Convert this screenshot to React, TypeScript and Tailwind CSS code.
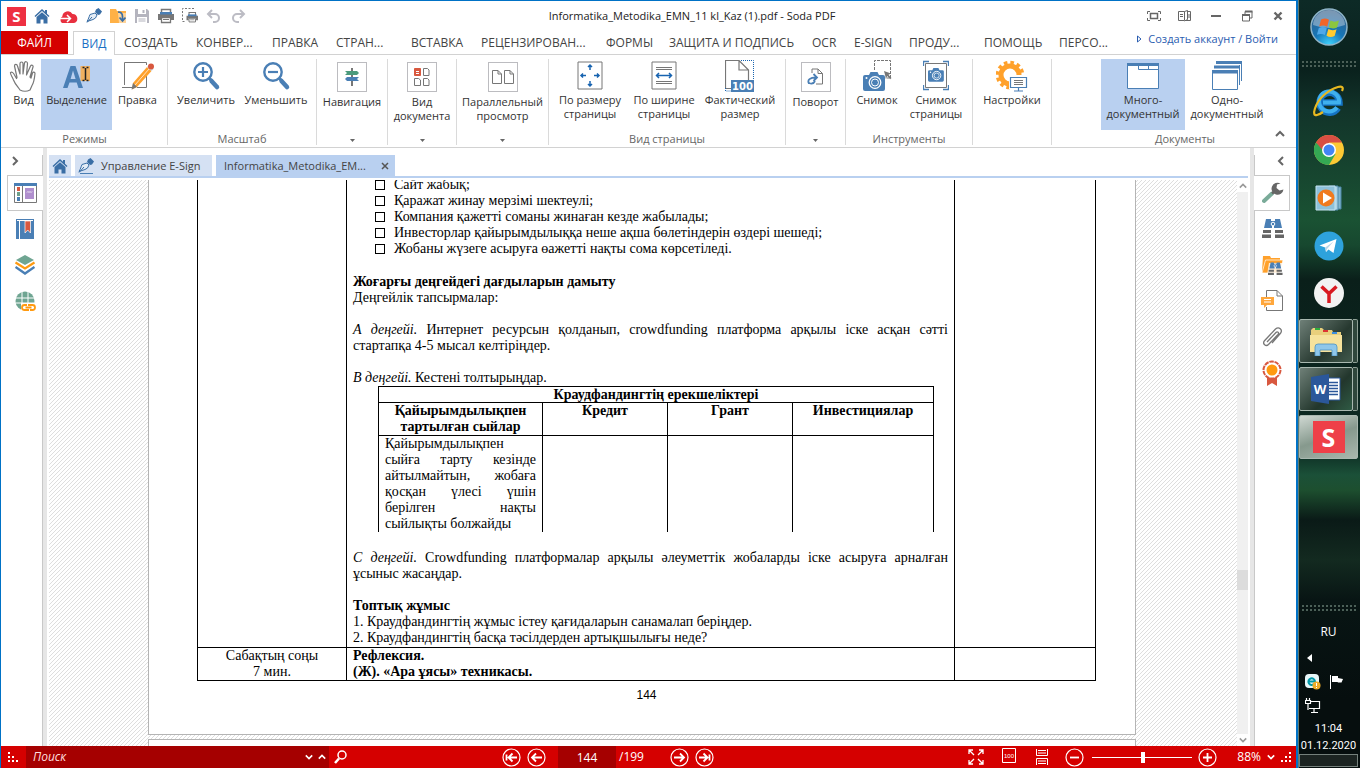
import React from "react";

type IconProps = { className?: string };

const BLUE = "#4a7fb5";
const GRAY = "#777777";
const ORANGE = "#ffa12b";

const HomeIcon = ({ className = "w-4 h-4" }: IconProps) => (
	<svg viewBox="0 0 16 16" className={className} fill="#3a6ea5" aria-hidden="true">
		<path d="M8 1 .5 8l1 1L8 3l6.500 6 1-1L13 5.700V2h-2v1.800z" />
		<path d="M2.500 9 8 4.200 13.500 9v6.500H9.500v-4h-3v4h-4z" />
	</svg>
);

const PenIcon = ({ className = "w-4 h-4", line = false }: IconProps & { line?: boolean }) => (
	<svg viewBox="0 0 16 16" className={className} fill="none" aria-hidden="true">
		<path d="M10 1.500 12.500 0 16 3.500 14 6.500 12 7 9 4z" fill="#3a6ea5" />
		<path d="M9 5 4 6.500C3 9 2.500 11 1 13.500l6-2 2.500-1.500L11 7z" fill="#e3ecf6" stroke="#3a6ea5" />
		<path d="M1 14.500 6 9" stroke="#3a6ea5" />
		{line && <path d="M2 15.500h13" stroke={BLUE} />}
	</svg>
);

const CloudIcon = () => (
	<svg viewBox="0 0 20 16" className="w-5 h-4 shrink-0" aria-hidden="true">
		<path d="M4 15a4 4 0 0 1 .3-6.500A5.500 5.500 0 0 1 14.500 6 4.600 4.600 0 0 1 16 15z" fill="#e8303f" />
		<path d="M0 10.500h12M9 7l3.500 3.500L9 14" stroke="#fff" strokeWidth="1.500" fill="none" />
	</svg>
);

const FolderDownIcon = () => (
	<svg viewBox="0 0 16 16" className="w-4 h-4" aria-hidden="true">
		<path d="M0 15V1h6l1 2h9v12z" fill="#ffb146" />
		<path d="M8 5h8v10H9z" fill="#fff" opacity=".45" />
		<path d="M8 4c3.500 0 4.500 1.500 4.500 4.500V12M9.500 9.500l3 3.500 3-3.500" stroke="#3a6ea5" strokeWidth="1.700" fill="none" />
	</svg>
);

const SaveIcon = () => (
	<svg viewBox="0 0 16 16" className="w-4 h-4" aria-hidden="true">
		<path d="M1 1h12l2 2v12H1z" fill="#b4b4be" />
		<path d="M4 1h8v5H4zM3 9h10v6H3z" fill="#fff" />
		<path d="M8.500 2h2v3h-2zM4.500 10.500h7v1h-7zM4.500 12.500h7v1h-7z" fill="#b4b4be" />
	</svg>
);

const PrintIcon = ({ dashed = false }: { dashed?: boolean }) => (
	<svg viewBox="0 0 16 16" className="w-4 h-4" fill="none" aria-hidden="true">
		{dashed && <path d="M12 .5H.5v13H4" stroke={GRAY} strokeDasharray="2 1.500" />}
		<g transform={dashed ? "translate(4.500 3.500) scale(.72)" : undefined}>
			<path d="M3.500 6V1.500h9V6" stroke={GRAY} strokeWidth="1.500" />
			<path d="M0 6h16v6h-3V9H3v3H0z" fill={GRAY} />
			<path d="M2 4h12v2.500H2z" fill={BLUE} />
			<path d="M3.500 9.500h9v5h-9z" fill="#fff" stroke={GRAY} strokeWidth="1.300" />
			<path d="M5 11.500h6" stroke={GRAY} />
		</g>
	</svg>
);

const UndoIcon = ({ className = "w-4 h-4" }: IconProps) => (
	<svg viewBox="0 0 16 16" className={className} fill="none" aria-hidden="true">
		<path d="M6 2 2 6l4 4M2 6h7a4 4 0 0 1 0 8H7" stroke="#bcbcc4" strokeWidth="2" />
	</svg>
);

const HandIcon = () => (
	<svg viewBox="0 0 30 32" className="w-[30px] h-8" aria-hidden="true">
		<path
			d="M11 30c-2-3-5-6-6.500-10C3.500 17 1 14 1.500 12.500c1.500-1 3 .5 4 2.500l2 3.500.5-1L5.500 6c0-2 2.500-2.200 3 0L11 14V3.500c0-2 3-2 3 0V14l1.500-11c.5-2 3-1.500 3 .5L17.500 15l4-9c1-1.700 3-.7 2.500 1l-3 10 1 1 1.500-5c.7-1.500 2.500-1 2.500.5-.5 5-1 9-3 12L21 30c-3 1.500-7 1.500-10 0z"
			fill="#fff"
			stroke="#777"
			strokeWidth="1.200"
			strokeLinejoin="round"
		/>
	</svg>
);

const SelectTextIcon = () => (
	<svg viewBox="0 0 30 32" className="w-[30px] h-8" aria-hidden="true">
		<path d="M18.500 6h9.500v15h-9.500z" fill="#f0b060" />
		<path d="M8.500 6h5l7.500 22h-4.500l-1.800-5.500H7.500L5.500 28H1zm2.500 4.500L8.600 19h5z" fill={BLUE} />
		<path d="M20.500 7.500h2M24.500 7.500h2M20.500 20.500h2M24.500 20.500h2M23.500 8v12" stroke="#222" strokeWidth="1.500" />
	</svg>
);

const EditIcon = () => (
	<svg viewBox="0 0 32 32" className="w-8 h-8" fill="none" aria-hidden="true">
		<path d="M24.500 14v13.500H15M10 27.500H0M2.500 25V2.500h22V5" stroke={GRAY} />
		<path d="m25 7 4.500 4L15 27l-5 2.500 1-6.500z" fill={ORANGE} />
		<path d="m11 23 4 4-5.500 2.500z" fill="#777" />
		<path d="m25 7 2-2 4.500 4-2 2z" fill="#cdd3dc" />
		<circle cx="29" cy="6.500" r="3" fill="#d8583f" />
		<path d="m27 9-14 16" stroke="#fff" strokeWidth=".7" />
	</svg>
);

const ZoomIcon = ({ plus = false }: { plus?: boolean }) => (
	<svg viewBox="0 0 30 32" className="w-[30px] h-8" fill="none" stroke={BLUE} aria-hidden="true">
		<circle cx="12" cy="12" r="8.700" strokeWidth="2.400" />
		<path d="m18 18 3 3" strokeWidth="3" />
		<path d="m20.500 21 5.500 6" strokeWidth="4.500" strokeLinecap="round" />
		<path d={plus ? "M7 12h10M12 7v10" : "M7 12h10"} strokeWidth="2.200" />
	</svg>
);

const NavIcon = () => (
	<svg viewBox="0 0 16 18" className="w-4 h-[18px]" aria-hidden="true">
		<path d="M7 0h2v18H7z" fill={GRAY} />
		<path d="M1 3h12l2 2-2 2H1l2-2z" fill="#4b9a7c" />
		<path d="M15 9H3l-2 2 2 2h12l-2-2z" fill={BLUE} />
	</svg>
);

const DocViewIcon = () => (
	<svg viewBox="0 0 16 18" className="w-4 h-[18px]" fill="none" stroke={GRAY} aria-hidden="true">
		<path d="M.5.500h6v7h-6z" fill="#d8583f" stroke="#d8583f" />
		<path d="M2 3.500h3M2 5.500h3" stroke="#fff" />
		<path d="M9.500.5h4l1.500 1.500v5.500H9.500zM.5 10.500h4L6.500 12v5.500h-6zM9.500 10.500h4L15 12v5.500H9.500z" />
	</svg>
);

const TwoPagesIcon = () => (
	<svg viewBox="0 0 22 14" className="w-[22px] h-3.5" fill="none" stroke={GRAY} aria-hidden="true">
		<path d="M.5.500H6L9.500 4v9.500h-9zM6 .5V4h3.500M12.500.5H18L21.500 4v9.500h-9zM18 .5V4h3.500" />
	</svg>
);

const FitPageIcon = () => (
	<svg viewBox="0 0 26 30" className="w-[26px] h-[30px]" fill="none" aria-hidden="true">
		<path d="M1 1h24v27H1z" fill="#fff" stroke={GRAY} />
		<path d="M13 4v5M13 20v5M4 14.500h5M17 14.500h5M11 6l2-2 2 2M11 23l2 2 2-2M6 12.500l-2 2 2 2M20 12.500l2 2-2 2" stroke="#1763b0" strokeWidth="1.500" />
	</svg>
);

const FitWidthIcon = () => (
	<svg viewBox="0 0 26 30" className="w-[26px] h-[30px]" fill="none" aria-hidden="true">
		<path d="M1 1h24v27H1z" fill="#fff" stroke={GRAY} />
		<path d="M5 6.500h16M5 8.500h16M5 20.500h16M5 22.500h16" stroke={GRAY} />
		<path d="M5 14.500h16M8 12l-2.500 2.500L8 17M18 12l2.500 2.500L18 17" stroke="#1763b0" strokeWidth="1.500" />
	</svg>
);

const ActualSizeIcon = () => (
	<svg viewBox="0 0 30 32" className="w-[30px] h-8" fill="none" aria-hidden="true">
		<path d="M6 28.500H.5V.500H14L23.500 10v10M14 .5V10h9.500" stroke={GRAY} strokeWidth="1.200" />
		<path d="M16 .5h12.500V20M.5 28v3H6" stroke="#1763b0" strokeDasharray="1 1" />
		<path d="M6 20h23v12H6z" fill={BLUE} />
		<text x="17.500" y="30" textAnchor="middle" fill="#fff" fontFamily="DejaVu Sans, sans-serif" fontSize="10" fontWeight="700">
			100
		</text>
	</svg>
);

const RotateIcon = () => (
	<svg viewBox="0 0 18 18" className="w-[18px] h-[18px]" fill="none" aria-hidden="true">
		<path d="M5 5V1h6l4.500 4.500V16H9M11 1v4.500h4.500" stroke={GRAY} />
		<path d="M2 15.500C0 12 3 9.500 9 9.500M6.500 6 10 9.500 6.500 13M2 15c3 1.500 5 0 6-2" stroke={BLUE} strokeWidth="1.800" />
	</svg>
);

const Camera = ({ transform }: { transform?: string }) => (
	<g transform={transform}>
		<path d="M0 5q0-2 2-2h4l1.500-3h7L16 3h4q2 0 2 2v12q0 2-2 2H2q-2 0-2-2z" fill={BLUE} />
		<circle cx="12" cy="10.500" r="5.800" fill="none" stroke="#fff" strokeWidth="1.300" />
		<circle cx="12" cy="10.500" r="3.500" fill="none" stroke="#fff" />
		<circle cx="3.500" cy="6" r="1" fill="#fff" />
	</g>
);

const SnapshotIcon = () => (
	<svg viewBox="0 0 30 32" className="w-[30px] h-8" fill="none" aria-hidden="true">
		<path d="M12.500 10V.500h16V18H23" stroke={GRAY} strokeDasharray="3 1" />
		<Camera transform="translate(1 12)" />
		<path d="m22 11 7 2.500-2.500 1.200 3 3.300-1.300 1.200-3-3.200-1.200 2.500z" fill={GRAY} />
	</svg>
);

const PageSnapshotIcon = () => (
	<svg viewBox="0 0 26 32" className="w-[26px] h-8" fill="none" aria-hidden="true">
		<path d="M.5 6V1.500H6M20 1.500h5.500V6M.5 25v4.500H6M20 29.500h5.500V25" stroke={BLUE} strokeWidth="1.300" />
		<path d="M2.500 3.500h21v24h-21z" fill="#fff" stroke={GRAY} />
		<Camera transform="translate(5 8) scale(.72)" />
	</svg>
);

const SettingsIcon = () => (
	<svg viewBox="0 0 32 32" className="w-8 h-8" fill="none" aria-hidden="true">
		<circle cx="14" cy="15" r="9" stroke={ORANGE} strokeWidth="5" />
		<circle cx="14" cy="15" r="12.300" stroke={ORANGE} strokeWidth="4" strokeDasharray="3.500 2.940" />
		<path d="M14 16h17v12H14z" fill="#fff" stroke="#fff" strokeWidth="2" />
		<path d="M14.500 17.500h16v10h-16zM22.500 28v3M18 31h9" stroke={BLUE} strokeWidth="1.200" />
		<path d="M18 20.500h9M18 22.500h9M18 24.500h9" stroke={GRAY} />
	</svg>
);

const MultiDocIcon = () => (
	<svg viewBox="0 0 32 28" className="w-8 h-7" aria-hidden="true">
		<path d="M.5 1.500h31v25H.5z" fill="#fff" stroke={BLUE} />
		<path d="M0 1h32v3H0z" fill={BLUE} />
		<path d="M11.500 4v3.500H32M21.500 4v3.500" fill="none" stroke={BLUE} />
	</svg>
);

const SingleDocIcon = () => (
	<svg viewBox="0 0 30 30" className="w-[30px] h-[30px]" fill="none" aria-hidden="true">
		<path d="M4 0h26v3H4zM2 4.500h26v3H2zM0 9h26v3H0z" fill={BLUE} />
		<path d="M29.500 0v20M27.500 4v20" stroke={BLUE} />
		<path d="M.5 12h25v16.500H.5z" fill="#fff" stroke={BLUE} />
	</svg>
);

const Chevron = ({ d, className = "w-2.5 h-2.5", stroke = "#666" }: { d: string; className?: string; stroke?: string }) => (
	<svg viewBox="0 0 10 10" className={className} fill="none" stroke={stroke} strokeWidth="2" aria-hidden="true">
		<path d={d} />
	</svg>
);

const UP = "M1 7l4-4 4 4";
const DOWN = "M1 3l4 4 4-4";
const LEFT = "M7 1L3 5l4 4";
const RIGHT = "M3 1l4 4-4 4";

const Caret = () => (
	<svg viewBox="0 0 5 3" className="w-[5px] h-[3px]" fill="#666" aria-hidden="true">
		<path d="M0 0h5L2.500 3z" />
	</svg>
);

/* ---------- ribbon ---------- */

interface RibbonButtonProps {
	icon: React.ReactNode;
	lines: string[];
	className: string;
	active?: boolean;
}

const RibbonButton = ({ icon, lines, className, active }: RibbonButtonProps) => (
	<button
		className={`h-[71px] shrink-0 flex flex-col items-center whitespace-nowrap text-[11px] leading-[14px] ${
			active ? "bg-[#b9d0f0]" : ""
		} ${className}`}
	>
		<span className="h-[34px] flex items-center">{icon}</span>
		{lines.map((l) => (
			<span key={l}>{l}</span>
		))}
	</button>
);

const RibbonMenu = ({ icon, lines, className }: RibbonButtonProps) => (
	<button
		className={`h-[86px] shrink-0 flex flex-col items-center border-r border-[#dadada] whitespace-nowrap text-[11px] leading-[14px] pt-[3px] ${className}`}
	>
		<span className="w-[30px] h-[30px] mb-[3px] border border-[#bcbcc0] flex items-center justify-center">{icon}</span>
		{lines.map((l) => (
			<span key={l}>{l}</span>
		))}
		<span className="mt-auto pb-[3px]">
			<Caret />
		</span>
	</button>
);

interface GroupProps {
	title?: string;
	className: string;
	children: React.ReactNode;
}

const RibbonGroup = ({ title, className, children }: GroupProps) => (
	<div className={`h-[86px] shrink-0 flex flex-col border-r border-[#dadada] ${className}`}>
		<div className="flex">{children}</div>
		{title && <div className="text-center text-[11px] leading-[18px] text-[#666]">{title}</div>}
	</div>
);

const Ribbon = () => (
	<div className="h-[93px] shrink-0 border-b border-[#d2d2d2] pt-1 flex text-[#333]">
		<RibbonGroup title="Режимы" className="w-[167px] pl-[5px] pr-1">
			<RibbonButton icon={<HandIcon />} lines={["Вид"]} className="w-[35px]" />
			<RibbonButton icon={<SelectTextIcon />} lines={["Выделение"]} className="w-[71px]" active />
			<RibbonButton icon={<EditIcon />} lines={["Правка"]} className="w-[51px]" />
		</RibbonGroup>
		<RibbonGroup title="Масштаб" className="w-[149px] px-[3px]">
			<RibbonButton icon={<ZoomIcon plus />} lines={["Увеличить"]} className="w-[70px]" />
			<RibbonButton icon={<ZoomIcon />} lines={["Уменьшить"]} className="w-[70px]" />
		</RibbonGroup>
		<RibbonMenu icon={<NavIcon />} lines={["Навигация"]} className="w-[71px]" />
		<RibbonMenu icon={<DocViewIcon />} lines={["Вид", "документа"]} className="w-[69px]" />
		<RibbonMenu icon={<TwoPagesIcon />} lines={["Параллельный", "просмотр"]} className="w-[92px]" />
		<RibbonGroup title="Вид страницы" className="w-[237px] px-[3px]">
			<RibbonButton icon={<FitPageIcon />} lines={["По размеру", "страницы"]} className="w-[76px]" />
			<RibbonButton icon={<FitWidthIcon />} lines={["По ширине", "страницы"]} className="w-[72px]" />
			<RibbonButton icon={<ActualSizeIcon />} lines={["Фактический", "размер"]} className="w-[80px]" />
		</RibbonGroup>
		<RibbonMenu icon={<RotateIcon />} lines={["Поворот"]} className="w-[60px]" />
		<RibbonGroup title="Инструменты" className="w-[127px] px-[3px]">
			<RibbonButton icon={<SnapshotIcon />} lines={["Снимок"]} className="w-[56px]" />
			<RibbonButton icon={<PageSnapshotIcon />} lines={["Снимок", "страницы"]} className="w-[62px]" />
		</RibbonGroup>
		<RibbonGroup className="w-[79px] px-[3px]">
			<RibbonButton icon={<SettingsIcon />} lines={["Настройки"]} className="w-[72px]" />
		</RibbonGroup>
		<div className="ml-auto flex">
			<div className="w-[168px]">
				<div className="flex">
					<RibbonButton icon={<MultiDocIcon />} lines={["Много-", "документный"]} className="w-[84px]" active />
					<RibbonButton icon={<SingleDocIcon />} lines={["Одно-", "документный"]} className="w-[84px]" />
				</div>
				<div className="text-center text-[11px] leading-[18px] text-[#666]">Документы</div>
			</div>
			<button aria-label="Свернуть ленту" className="w-[27px] self-end pb-2 pl-1.5">
				<Chevron d={UP} />
			</button>
		</div>
	</div>
);

const MENU = [
	{ label: "СОЗДАТЬ", w: "w-[72px]" },
	{ label: "КОНВЕР...", w: "w-[76px]" },
	{ label: "ПРАВКА", w: "w-[64px]" },
	{ label: "СТРАН...", w: "w-[75px]" },
	{ label: "ВСТАВКА", w: "w-[70px]" },
	{ label: "РЕЦЕНЗИРОВАН...", w: "w-[125px]" },
	{ label: "ФОРМЫ", w: "w-[63px]" },
	{ label: "ЗАЩИТА И ПОДПИСЬ", w: "w-[143px]" },
	{ label: "OCR", w: "w-[42px]" },
	{ label: "E-SIGN", w: "w-[55px]" },
	{ label: "ПРОДУ...", w: "w-[75px]" },
	{ label: "ПОМОЩЬ", w: "w-[75px]" },
	{ label: "ПЕРСО...", w: "w-[75px]" },
];

const TitleBar = () => (
	<header className="h-[30px] shrink-0 flex items-center pl-1.5 pr-2.5">
		<span className="w-[19px] h-[19px] mr-1 bg-[#ee3042] text-white font-bold text-[15px] leading-[19px] text-center">S</span>
		<div className="flex items-center">
			{[
				{ label: "Домой", icon: <HomeIcon />, w: "w-6" },
				{ label: "Облако", icon: <CloudIcon />, w: "w-7" },
				{ label: "Подпись", icon: <PenIcon />, w: "w-6" },
				{ label: "Открыть", icon: <FolderDownIcon />, w: "w-6" },
				{ label: "Сохранить", icon: <SaveIcon />, w: "w-6" },
				{ label: "Печать", icon: <PrintIcon />, w: "w-6" },
				{ label: "Печать области", icon: <PrintIcon dashed />, w: "w-6" },
				{ label: "Отменить", icon: <UndoIcon className="w-4 h-4" />, w: "w-6" },
				{ label: "Вернуть", icon: <UndoIcon className="w-4 h-4 -scale-x-100" />, w: "w-6" },
			].map((b) => (
				<button key={b.label} aria-label={b.label} className={`${b.w} h-6 flex items-center justify-center`}>
					{b.icon}
				</button>
			))}
		</div>
		<h1 className="flex-1 pr-3 text-center text-[11px] text-[#222] whitespace-nowrap">
			Informatika_Metodika_EMN_11 kl_Kaz (1).pdf - Soda PDF
		</h1>
		<div className="flex items-center gap-[15px]">
			<button aria-label="Во весь экран">
				<svg viewBox="0 0 16 12" className="w-4 h-3" fill="none" stroke="#666">
					<path d="M1.500 4V1.500H4M12 1.500h2.500V4M1.500 8v2.500H4M12 10.500h2.500V8" />
					<path d="M4.500 3.500h7v5h-7z" strokeWidth="1.500" />
				</svg>
			</button>
			<button aria-label="Режим чтения">
				<svg viewBox="0 0 16 12" className="w-4 h-3" fill="none" stroke="#666">
					<path d="M7.500 1.500h-6v9h6zM7.500 1.500l3-1v9l-3 1.500M10.500 1.500h3v9h-5M3 4.500h3M3 6.500h3M12 4v4" />
				</svg>
			</button>
			<button aria-label="Свернуть">
				<svg viewBox="0 0 16 12" className="w-4 h-3" fill="none" stroke="#666">
					<path d="M3 6h10" strokeWidth="2" />
				</svg>
			</button>
			<button aria-label="Восстановить">
				<svg viewBox="0 0 16 12" className="w-4 h-3" fill="none" stroke="#666">
					<path d="M3.500 5h7v6h-7zM6 4.500V1.500h7V8h-2" />
					<path d="M3 5h8M6 1.500h7.500" strokeWidth="2" />
				</svg>
			</button>
			<button aria-label="Закрыть">
				<svg viewBox="0 0 16 12" className="w-4 h-3" fill="none" stroke="#666">
					<path d="m4.500 2.500 7 7M11.500 2.500l-7 7" strokeWidth="2.400" />
				</svg>
			</button>
		</div>
	</header>
);

const MenuBar = () => (
	<nav className="h-6 shrink-0 flex border-b border-[#d2d2d2] text-[12px] leading-6 text-[#444] whitespace-nowrap">
		<button className="w-[67px] bg-[#d50000] text-white text-center">ФАЙЛ</button>
		<button className="ml-[5px] w-[42px] h-6 border border-b-0 border-[#d2d2d2] bg-white text-[#1a6fc4] text-center leading-[22px]">
			ВИД
		</button>
		{MENU.map((m) => (
			<button key={m.label} className={`${m.w} shrink-0 pl-[9px] text-left`}>
				{m.label}
			</button>
		))}
		<a href="#account" className="ml-auto mr-[18px] flex items-center gap-1.5 h-4 leading-4 text-[11px] text-[#2a5db0]">
			<svg viewBox="0 0 5 8" className="w-[5px] h-2" fill="none" stroke="#2a5db0">
				<path d="M.5 1v6L4 4z" />
			</svg>
			Создать аккаунт / Войти
		</a>
	</nav>
);

/* ---------- side panels ---------- */

const LeftPanel = () => (
	<aside className="w-[46px] shrink-0 flex border-r-4 border-[#e6e6e6]">
		<div className="flex-1 mt-[7px] border-r border-[#c8c8c8] flex flex-col">
			<button aria-label="Развернуть панель" className="h-5 pl-[9px] pb-2">
				<Chevron d={RIGHT} />
			</button>
			<button aria-label="Страницы" className="h-9 ml-1.5 -mr-px pl-1.5 bg-white border border-r-0 border-[#c8c8c8] flex items-center">
				<svg viewBox="0 0 23 20" className="w-[23px] h-5" fill="none">
					<path d="M.5 1.500h22v18H.5zM8.500 3v16" stroke={GRAY} />
					<path d="M0 0h23v3H0zM3 14h3v4H3z" fill={BLUE} />
					<path d="M3 4h3v4H3z" fill="#d8583f" />
					<path d="M3 9h3v4H3z" fill="#6fa08b" />
					<path d="M11 5h9v11h-9z" fill="#b08fce" />
					<path d="m13 9.500 1-1 1 1 1-1 1 1 1-1" stroke="#fff" strokeWidth=".8" />
				</svg>
			</button>
			<button aria-label="Закладки" className="h-9 pl-[15px] flex items-center">
				<svg viewBox="0 0 18 20" className="w-[18px] h-5">
					<path d="M0 0h18v20H0z" fill={BLUE} />
					<path d="M1 1.500h16M3.500 2v18" stroke="#fff" />
					<path d="M9 2h5.500v12L11.700 11 9 14z" fill="#d8583f" stroke="#fff" strokeWidth=".7" />
				</svg>
			</button>
			<button aria-label="Слои" className="h-9 pl-3.5 flex items-center">
				<svg viewBox="0 0 20 20" className="w-5 h-5" fill="none">
					<path d="M10 0 19 5l-9 5-9-5z" fill="#6fa592" />
					<path d="m.5 7.500 9.500 6 9.500-6" stroke="#ff9a10" strokeWidth="2.200" />
					<path d="M.5 12 10 18.500 19.500 12" stroke={BLUE} strokeWidth="2.400" />
				</svg>
			</button>
			<button aria-label="Ссылки" className="h-9 pl-3.5 flex items-center">
				<svg viewBox="0 0 21 20" className="w-[21px] h-5" fill="none">
					<circle cx="10" cy="10" r="9.500" fill="#6fa592" />
					<path d="M1 7h18M1 12h18M7 1v18M13 1v18" stroke="#fff" />
					<path d="M6 12h15v8H6z" fill="#fff" />
					<path d="M12 14H9.500a2.300 2.300 0 0 0 0 5H14M15 19h2.500a2.300 2.300 0 0 0 0-5H13M10.500 16.500h6" stroke="#ff9a10" strokeWidth="1.800" />
				</svg>
			</button>
		</div>
	</aside>
);

const Binoculars = ({ transform }: { transform?: string }) => (
	<g transform={transform}>
		<path d="M4 0h5v2h4V0h5l2 9H12V7h-2v2H2z" fill={BLUE} />
		<path d="M1 11h8v3H1zM13 11h8v3h-8zM0 15.500h9V19H0zM13 15.500h9V19h-9z" fill="#666" />
		<circle cx="11" cy="5" r="1.800" fill="none" stroke="#fff" />
	</g>
);

const RightPanel = () => (
	<aside className="w-[46px] shrink-0 flex border-l-4 border-[#e6e6e6]">
		<div className="flex-1 mt-[7px] border-l border-[#c8c8c8] flex flex-col">
			<button aria-label="Развернуть панель" className="h-5 pl-[21px] pb-2">
				<Chevron d={LEFT} />
			</button>
			<button aria-label="Инструменты" className="h-9 w-9 -ml-px pl-2 bg-white border border-l-0 border-[#c8c8c8] flex items-center">
				<svg viewBox="0 0 22 22" className="w-[22px] h-[22px]" fill="none">
					<path d="m2 19 8-7.500" stroke="#7aab99" strokeWidth="4" strokeLinecap="round" />
					<path d="m10 11.500 3-2.500" stroke="#666" strokeWidth="2.500" />
					<path d="M18.500 1.500a6 6 0 1 0 3 6l-4 1-3-2.500.5-3.500z" fill="#666" />
				</svg>
			</button>
			<button aria-label="Поиск" className="h-9 pl-[7px] flex items-center">
				<svg viewBox="0 0 22 20" className="w-[22px] h-5">
					<Binoculars />
				</svg>
			</button>
			<button aria-label="Поиск в папке" className="h-9 pl-[6px] flex items-center">
				<svg viewBox="0 0 22 20" className="w-[22px] h-5">
					<path d="M2 1h7l1 2h9v4H5L1.500 17H1z" fill={ORANGE} />
					<path d="M4.500 5H22l-3 13H1z" fill={ORANGE} stroke="#fff" strokeWidth=".7" />
					<path d="M8 8h14v12H6z" fill="#fff" opacity=".8" />
					<Binoculars transform="translate(7 7.500) scale(.66)" />
				</svg>
			</button>
			<button aria-label="Комментарии" className="h-9 pl-[6px] flex items-center">
				<svg viewBox="0 0 22 22" className="w-[22px] h-[22px]" fill="none">
					<path d="M5.500 8V.500H16l5.500 5.500v14.500h-16V17M16 .5V6h5.500" stroke={GRAY} />
					<path d="M0 7h13v8H6l-3 3v-3H0z" fill="#ffa73c" />
					<path d="M3 9.500h7M3 12h7" stroke="#fff" />
				</svg>
			</button>
			<button aria-label="Вложения" className="h-9 pl-[6px] flex items-center">
				<svg viewBox="0 0 22 22" className="w-[22px] h-[22px]" fill="none" stroke="#777" strokeWidth="1.300">
					<path d="M6 16 15 6.500c1.500-1.500 3.500.3 2 2L7.500 18.500c-2.500 2.500-6.500-.5-4-3.800L14.500 3c3.500-3 7.500.8 5 4.300L11 17" />
				</svg>
			</button>
			<button aria-label="Сертификаты" className="h-9 pl-[7px] flex items-center">
				<svg viewBox="0 0 20 26" className="w-5 h-[26px]" fill="none">
					<path d="M5 17h10v9l-5-3-5 3z" fill="#d8583f" />
					<circle cx="10" cy="10" r="8.500" fill="#fff" stroke="#d8583f" strokeWidth="2" strokeDasharray="4.500 .8" />
					<circle cx="10" cy="10" r="5.500" fill="#ff9a10" />
				</svg>
			</button>
		</div>
	</aside>
);

/* ---------- document ---------- */

const DocTabs = () => (
	<div className="h-[23px] shrink-0 flex items-start border-b-2 border-[#b9d0f0] text-[11px] leading-[21px] text-[#444] whitespace-nowrap">
		<button aria-label="Главная" className="w-[22px] h-[21px] mr-1 bg-[#d5e1f3] flex items-center justify-center">
			<HomeIcon />
		</button>
		<button className="w-[137px] h-[21px] mr-1 bg-[#d5e1f3] flex items-center pl-[3px] gap-[7px]">
			<PenIcon line />
			Управление E-Sign
		</button>
		<div className="w-[179px] h-[21px] bg-[#b9d0f0] flex items-center justify-between pl-2 pr-1.5">
			Informatika_Metodika_EM...
			<button aria-label="Закрыть вкладку">
				<svg viewBox="0 0 8 8" className="w-2 h-2" stroke="#555" strokeWidth="1.500">
					<path d="m1 1 6 6M7 1 1 7" />
				</svg>
			</button>
		</div>
	</div>
);

const BULLETS = [
	"Сайт жабық;",
	"Қаражат жинау мерзімі шектеулі;",
	"Компания қажетті соманы жинаған кезде жабылады;",
	"Инвесторлар қайырымдылыққа неше ақша бөлетіндерін өздері шешеді;",
	"Жобаны жүзеге асыруға өажетті нақты сома көрсетіледі.",
];

const InnerTable = () => (
	<table className="ml-[25px] w-[556px] table-fixed border-collapse">
		<colgroup>
			<col className="w-[164px]" />
			<col className="w-[125px]" />
			<col className="w-[125px]" />
			<col className="w-[141px]" />
		</colgroup>
		<thead>
			<tr>
				<th colSpan={4} className="border border-black p-0 leading-[15px]">
					Краудфандингтің ерекшеліктері
				</th>
			</tr>
			<tr className="align-top">
				<th className="border border-black p-0">Қайырымдылықпен тартылған сыйлар</th>
				<th className="border border-black p-0">Кредит</th>
				<th className="border border-black p-0">Грант</th>
				<th className="border border-black p-0">Инвестициялар</th>
			</tr>
		</thead>
		<tbody>
			<tr>
				<td className="border border-b-0 border-black px-1.5 py-0 text-justify">
					Қайырымдылықпен сыйға тарту кезінде айтылмайтын, жобаға қосқан үлесі үшін берілген нақты сыйлықты болжайды
				</td>
				<td className="border border-b-0 border-black" />
				<td className="border border-b-0 border-black" />
				<td className="border border-b-0 border-black" />
			</tr>
		</tbody>
	</table>
);

const Page = () => (
	<article className="mx-auto w-[988px] shrink-0 bg-white border border-t-0 border-[#b4b4b4] pl-[48px] h-[555px]">
		<table className="-mt-[5px] w-[899px] table-fixed border-collapse font-['Liberation_Serif',serif] text-[14px] leading-4 text-black">
			<colgroup>
				<col className="w-[149px]" />
				<col className="w-[608px]" />
				<col className="w-[141px]" />
			</colgroup>
			<tbody>
				<tr className="align-top">
					<td className="border border-black" />
					<td className="border border-black px-1.5 pt-[1px] pb-0">
						<ul className="pl-[22px] mb-[17px]">
							{BULLETS.map((b) => (
								<li key={b} className="flex items-center gap-[9px]">
									<span className="w-2.5 h-2.5 border border-black" />
									{b}
								</li>
							))}
						</ul>
						<h2 className="font-bold">Жоғарғы деңгейдегі дағдыларын дамыту</h2>
						<p className="mb-4">Деңгейлік тапсырмалар:</p>
						<p className="mb-4 text-justify">
							<i>А деңгейі.</i> Интернет ресурсын қолданып, crowdfunding платформа арқылы іске асқан сәтті стартапқа 4-5 мысал
							келтіріңдер.
						</p>
						<p>
							<i>В деңгейі.</i> Кестені толтырыңдар.
						</p>
						<InnerTable />
						<p className="mt-[18px] mb-4 text-justify">
							<i>С деңгейі.</i> Crowdfunding платформалар арқылы әлеуметтік жобаларды іске асыруға арналған ұсыныс жасаңдар.
						</p>
						<h2 className="font-bold">Топтық жұмыс</h2>
						<p>1. Краудфандингтің жұмыс істеу қағидаларын санамалап беріңдер.</p>
						<p className="mb-px">2. Краудфандингтің басқа тәсілдерден артықшылығы неде?</p>
					</td>
					<td className="border border-black" />
				</tr>
				<tr className="align-top">
					<td className="border border-black p-0 text-center">
						Сабақтың соңы
						<br />7 мин.
					</td>
					<td className="border border-black px-1.5 py-0 font-bold">
						Рефлексия.
						<br />
						(Ж). «Ара ұясы» техникасы.
					</td>
					<td className="border border-black" />
				</tr>
			</tbody>
		</table>
		<p className="w-[899px] mt-[6px] text-center font-['Liberation_Sans',sans-serif] text-[12px] leading-4 text-black">144</p>
	</article>
);

const Viewer = () => (
	<main className="flex-1 min-w-0 mx-0.5 mt-[7px] flex flex-col">
		<DocTabs />
		<div className="flex-1 min-h-0 mt-0.5 flex">
			<div className="flex-1 min-w-0 overflow-hidden flex flex-col gap-1 pr-0.5 bg-white bg-[linear-gradient(135deg,#dedede_12.5%,transparent_12.5%_50%,#dedede_50%_62.5%,transparent_62.5%)] bg-[length:4px_4px]">
				<Page />
				<div className="mx-auto w-[988px] flex-1 bg-white border border-b-0 border-[#b4b4b4]" />
			</div>
			<div className="w-[11px] flex flex-col items-center bg-white">
				<Chevron d={UP} className="w-2 h-3 shrink-0" stroke="#999" />
				<div className="w-full flex-1 bg-[#f0f0f0] flex flex-col">
					<div className="flex-[377]" />
					<div className="h-5 bg-[#dcdcdc]" />
					<div className="flex-[143]" />
				</div>
				<Chevron d={DOWN} className="w-2 h-3 shrink-0" stroke="#999" />
			</div>
		</div>
	</main>
);

/* ---------- status bar ---------- */

const CircleButton = ({ label, d, className = "" }: { label: string; d: string; className?: string }) => (
	<button aria-label={label} className={className}>
		<svg viewBox="0 0 19 19" className="w-[19px] h-[19px]" fill="none" stroke="#fff">
			<circle cx="9.500" cy="9.500" r="8.500" strokeWidth="1.200" />
			<path d={d} strokeWidth="1.800" />
		</svg>
	</button>
);

const Grip = ({ className = "" }: IconProps) => (
	<svg viewBox="0 0 10 10" className={`w-2.5 h-2.5 ${className}`} fill="#fff" aria-hidden="true">
		<path d="M0 0h2v2H0zM0 4h2v2H0zM0 8h2v2H0zM4 4h2v2H4zM4 8h2v2H4zM8 8h2v2H8z" />
	</svg>
);

const StatusBar = () => (
	<footer className="h-[22px] shrink-0 bg-[#d50000] text-white text-[12px] flex items-center">
		<Grip className="mx-[7px]" />
		<div className="w-[303px] ml-px h-full bg-[#a50000] flex items-center">
			<input
				aria-label="Поиск"
				placeholder="Поиск"
				className="flex-1 min-w-0 pl-[7px] bg-transparent italic text-[12px] placeholder:text-[#ffdede] outline-none"
			/>
			<button aria-label="Следующее" className="mr-[5px]">
				<Chevron d={DOWN} className="w-2 h-2" stroke="#fff" />
			</button>
			<button aria-label="Предыдущее" className="mr-[3px]">
				<Chevron d={UP} className="w-2 h-2" stroke="#fff" />
			</button>
		</div>
		<button aria-label="Найти" className="ml-[5px]">
			<svg viewBox="0 0 13 14" className="w-[13px] h-3.5" fill="none" stroke="#fff">
				<circle cx="8" cy="5" r="4" strokeWidth="1.500" />
				<path d="M5 8.500 1 13" strokeWidth="2.500" />
			</svg>
		</button>
		<CircleButton className="ml-[155px]" label="Первая страница" d="M15 9.500H7M10.500 5.500l-4 4 4 4M4.500 6.500v6" />
		<CircleButton className="ml-1.5" label="Назад" d="M15 9.500H5M9 5.500l-4 4 4 4" />
		<input aria-label="Страница" defaultValue="144" className="w-[58px] h-full ml-3 bg-[#a50000] text-center" />
		<span className="w-[54px] pl-[3px]">/199</span>
		<CircleButton label="Вперёд" d="M4 9.500h10M10 5.500l4 4-4 4" />
		<CircleButton className="ml-1.5" label="Последняя страница" d="M4 9.500h8M8.500 5.500l4 4-4 4M14.500 6.500v6" />
		<div className="ml-auto flex items-center pr-[5px]">
			<button aria-label="По размеру окна">
				<svg viewBox="0 0 16 16" className="w-4 h-4" fill="none" stroke="#fff" strokeWidth="1.300">
					<path d="M1 5V1h4M1 1l5 5M11 1h4v4M15 1l-5 5M1 11v4h4M1 15l5-5M15 11v4h-4M15 15l-5-5" />
				</svg>
			</button>
			<button aria-label="Фактический размер" className="ml-[18px] mb-1">
				<svg viewBox="0 0 14 15" className="w-3.5 h-[15px]">
					<path d="M.5.500h13v14H.5z" fill="none" stroke="#fff" />
					<text x="7" y="9.500" textAnchor="middle" fill="#fff" fontFamily="Liberation Sans, sans-serif" fontSize="6">
						100
					</text>
				</svg>
			</button>
			<button aria-label="Непрерывный просмотр" className="ml-[19px]">
				<svg viewBox="0 0 14 16" className="w-3.5 h-4" fill="none" stroke="#fff">
					<path d="M1.500 0v6.500h11V0M3 1.500h8M3 4h8M1.500 16V9.500h11V16M3 12h8M3 14.500h8" />
				</svg>
			</button>
			<CircleButton className="ml-[16px]" label="Уменьшить масштаб" d="M5 9.500h9" />
			<div className="relative ml-2 w-[100px] h-5 flex items-center">
				<div className="w-full h-px bg-white" />
				<div className="absolute left-[49px] w-1 h-[11px] bg-white" />
				<input
					type="range"
					aria-label="Масштаб"
					min={0}
					max={176}
					defaultValue={88}
					className="absolute inset-0 w-full opacity-0"
				/>
			</div>
			<CircleButton className="ml-1.5" label="Увеличить масштаб" d="M5 9.500h9M9.500 5v9" />
			<span className="ml-5">88%</span>
			<button aria-label="Выбрать масштаб" className="mx-1.5">
				<Chevron d={DOWN} className="w-2 h-2" stroke="#fff" />
			</button>
			<Grip className="-scale-x-100" />
		</div>
	</footer>
);

/* ---------- taskbar ---------- */

const WinFlag = () => (
	<g>
		<path d="M11 11.500c3-1.500 5.500-1.300 8 .2l-1.800 7c-2.600-1.400-5-1.500-8-.2z" fill="#f0652a" />
		<path d="M20.500 12.500c3 1.600 5.500 1.500 8.500 0l-2 7c-2.800 1.300-5.500 1.300-8.200-.2z" fill="#8cc63f" />
		<path d="M8.800 20c3-1.400 5.500-1.200 8 .2l-1.900 6.800c-2.500-1.400-5-1.500-8-.2z" fill="#4fa8e8" />
		<path d="M18.300 21c2.800 1.500 5.400 1.500 8.300.2l-2 6.800c-2.800 1.300-5.400 1.200-8.100-.3z" fill="#ffcb2f" />
	</g>
);

const StartOrb = () => (
	<svg viewBox="0 0 38 38" className="w-[38px] h-[38px]" aria-hidden="true">
		<defs>
			<radialGradient id="orb" cx=".5" cy="1" r=".95">
				<stop offset="0" stopColor="#3fd4ff" />
				<stop offset=".45" stopColor="#1676b8" />
				<stop offset="1" stopColor="#35608a" />
			</radialGradient>
		</defs>
		<circle cx="19" cy="19" r="18" fill="url(#orb)" stroke="#8fb4c8" strokeWidth="1.500" />
		<path d="M3 17a16 15 0 0 1 32 0q-16 6-32 0z" fill="#fff" opacity=".35" />
		<WinFlag />
	</svg>
);

const IeIcon = () => (
	<svg viewBox="0 0 34 34" className="w-[34px] h-[34px]" fill="none" aria-hidden="true">
		<path d="M26 24a10 10 0 1 1 1.500-5.500H11" stroke="#1573c4" strokeWidth="6.500" />
		<path d="M25 23.500a10 10 0 1 1 2-5H11" stroke="#3fb0ee" strokeWidth="4" />
		<path d="M30 7c4-8-9-4-18 4S-1 33 5 31c2-.5 4-1.500 6-3" stroke="#e8b820" strokeWidth="2.200" />
	</svg>
);

const ChromeIcon = () => (
	<svg viewBox="0 0 30 30" className="w-[30px] h-[30px]" aria-hidden="true">
		<circle cx="15" cy="15" r="15" fill="#fcc934" />
		<path d="M15 15 2 7.500A15 15 0 0 0 15 30l6.500-11z" fill="#34a853" />
		<path d="M15 15H8.500L2 7.500a15 15 0 0 1 26 0H15z" fill="#d94f43" />
		<circle cx="15" cy="15" r="7" fill="#fff" />
		<circle cx="15" cy="15" r="5.500" fill="#4285f4" />
	</svg>
);

const MediaIcon = () => (
	<svg viewBox="0 0 28 28" className="w-7 h-7" aria-hidden="true">
		<path d="M17 3h9v22h-9z" fill="#7fb4cf" stroke="#4d87a5" />
		<path d="M14 2h9v24h-9z" fill="#a9d2e6" stroke="#4d87a5" />
		<path d="M1 2h19v24H1z" fill="#8ec1da" stroke="#c5e3f0" />
		<circle cx="11" cy="14" r="8.500" fill="#f07a1e" />
		<path d="m8 8.500 9 5.500-9 5.500z" fill="#fff" />
	</svg>
);

const TelegramIcon = () => (
	<svg viewBox="0 0 30 30" className="w-[30px] h-[30px]" aria-hidden="true">
		<circle cx="15" cy="15" r="14.500" fill="#2ea2dc" />
		<path d="M5.500 14.500 22.500 8l-3 14-5-3.500-2.500 2.500-.8-4.500z" fill="#fff" />
		<path d="m11.200 16.500 8.300-6-6.500 7.500-1 3z" fill="#b9d5e8" />
	</svg>
);

const YandexIcon = () => (
	<svg viewBox="0 0 30 30" className="w-[30px] h-[30px]" fill="none" aria-hidden="true">
		<circle cx="15" cy="15" r="15" fill="#f2f2f2" />
		<path d="m7.500 8.500 7.500 7 7.500-7M15 15v10" stroke="#d81820" strokeWidth="3.500" />
	</svg>
);

const ExplorerIcon = () => (
	<svg viewBox="0 0 32 30" className="w-8 h-[30px]" aria-hidden="true">
		<path d="M1 8V4l2-2h9l2 2h8l1 2h8v20H1z" fill="#e9cf7c" />
		<path d="M5 2h5v2H5z" fill="#2fae3c" />
		<path d="M13 4h5v2h-5z" fill="#d33" />
		<path d="M22 6h5v2h-5z" fill="#3b8fe0" />
		<path d="M0 9h32v17H0z" fill="#f6e29c" />
		<path d="M5 30V21q0-3 3-3h16q3 0 3 3v9h-5v-6H10v6z" fill="#8fc7ea" stroke="#4c93c2" strokeWidth=".8" />
	</svg>
);

const WordIcon = () => (
	<svg viewBox="0 0 30 30" className="w-[30px] h-[30px]" aria-hidden="true">
		<path d="M14 4h15v22H14z" fill="#fff" stroke="#2b579a" />
		<path d="M18 8.500h9M18 11.500h9M18 14.500h9M18 17.500h9M18 20.500h9" stroke="#2b579a" strokeWidth="1.400" />
		<path d="M0 3 18 0v30L0 27z" fill="#2b579a" />
		<text x="9" y="20" textAnchor="middle" fill="#fff" fontFamily="Open Sans, sans-serif" fontSize="13" fontWeight="700">
			W
		</text>
	</svg>
);

const DOTS = "w-14 h-2 shrink-0 bg-[radial-gradient(circle,#4c6058_1px,transparent_1px)] bg-[length:4px_4px]";

const TaskButton = ({ label, stack = false, className, children }: { label: string; stack?: boolean; className: string; children: React.ReactNode }) => (
	<div className="h-[44px] w-full shrink-0 flex mb-1">
		<button
			aria-label={label}
			className={`flex-1 border border-[#a9b8b0] rounded-[2px] flex items-center justify-center ${className}`}
		>
			{children}
		</button>
		{stack && <div className="w-[5px] border border-l-0 border-[#8fa096] rounded-r-[2px] bg-[#2f473c]" />}
	</div>
);

const Taskbar = () => (
	<aside className="w-[62px] shrink-0 pr-0.5 border-l border-[#5d7a72] flex flex-col items-center text-white bg-[linear-gradient(180deg,#0d2a26_0px,#0a211d_70px,#12342a_110px,#1a5233_220px,#17482f_245px,#0a1f1a_280px,#0c2a22_450px,#1b5038_475px,#1d4f2f_490px,#0a1a17_520px,#132a20_560px,#081514_600px,#060e0e_700px)]">
		<button aria-label="Пуск" className="mt-2 mb-[14px]">
			<StartOrb />
		</button>
		<div className={DOTS} />
		<div className="mt-4 mb-[11px] flex flex-col items-center gap-[17px]">
			<button aria-label="Internet Explorer">
				<IeIcon />
			</button>
			<button aria-label="Chrome">
				<ChromeIcon />
			</button>
			<button aria-label="Проигрыватель" className="my-0.5">
				<MediaIcon />
			</button>
			<button aria-label="Telegram">
				<TelegramIcon />
			</button>
			<button aria-label="Яндекс">
				<YandexIcon />
			</button>
		</div>
		<TaskButton label="Проводник" stack className="bg-[linear-gradient(135deg,#6f8078,#26382f_60%,#41594c)]">
			<ExplorerIcon />
		</TaskButton>
		<TaskButton label="Word" stack className="bg-[linear-gradient(135deg,#6f8078,#22362c_60%,#2f5a44)]">
			<WordIcon />
		</TaskButton>
		<TaskButton label="Soda PDF" className="bg-[linear-gradient(160deg,#cfd8d2,#86998d_50%,#a9b8ae)]">
			<span className="w-8 h-8 bg-[#ee4048] text-[25px] leading-8 font-bold">S</span>
		</TaskButton>
		<div className="flex-1" />
		<div className={DOTS} />
		<span className="mt-3 text-[12px] leading-4">RU</span>
		<button aria-label="Скрытые значки" className="mt-3.5 self-start ml-2">
			<svg viewBox="0 0 5 8" className="w-[5px] h-2" fill="#fff">
				<path d="M5 0v8L0 4z" />
			</svg>
		</button>
		<div className="mt-3 w-full pl-1.5 grid grid-cols-[24px_24px] gap-y-2">
			<svg viewBox="0 0 16 16" className="w-4 h-4" fill="none" aria-label="Антивирус">
				<rect width="14" height="14" rx="4" fill="#e8f6f8" />
				<path d="M3.500 7.500h6.500a3.300 3.300 0 1 0-1 2.500" stroke="#0098a8" strokeWidth="2" />
				<circle cx="11.500" cy="11.500" r="4" fill="#f0ac28" />
				<path d="M11.500 9v3M11.500 13v1" stroke="#fff" />
			</svg>
			<svg viewBox="0 0 16 16" className="w-4 h-4" aria-label="Центр поддержки">
				<path d="M1 1h1v14H1z" fill="#fff" />
				<path d="M3 2h6v2l5 1-1.500 3.500H9L8.500 8H3z" fill="#fff" />
			</svg>
			<svg viewBox="0 0 16 16" className="w-4 h-4" fill="none" stroke="#fff" aria-label="Сеть">
				<path d="M6 3.500h8.500v7H4M9 11v3M6 14.500h7M1.500 0v2M4.500 0v2M.5 2.500h5v3h-5zM3 6v6" strokeWidth="1.200" />
			</svg>
		</div>
		<time className="mt-1.5 text-center text-[11px] leading-[17px] whitespace-nowrap font-['Roboto',sans-serif]">
			11:04
			<br />
			01.12.2020
		</time>
		<button aria-label="Показать рабочий стол" className="w-full h-[13px] mb-px shrink-0 border border-[#75807c] bg-[#1c2422]" />
	</aside>
);

export default function App() {
	return (
		<div className="h-screen flex overflow-hidden bg-[#0d2a26] font-['Open_Sans',sans-serif]">
			<div className="flex-1 min-w-0 flex flex-col bg-white border border-r-2 border-b-0 border-[#0072c6]">
				<TitleBar />
				<MenuBar />
				<Ribbon />
				<div className="flex-1 min-h-0 flex">
					<LeftPanel />
					<Viewer />
					<RightPanel />
				</div>
				<StatusBar />
			</div>
			<Taskbar />
		</div>
	);
}
